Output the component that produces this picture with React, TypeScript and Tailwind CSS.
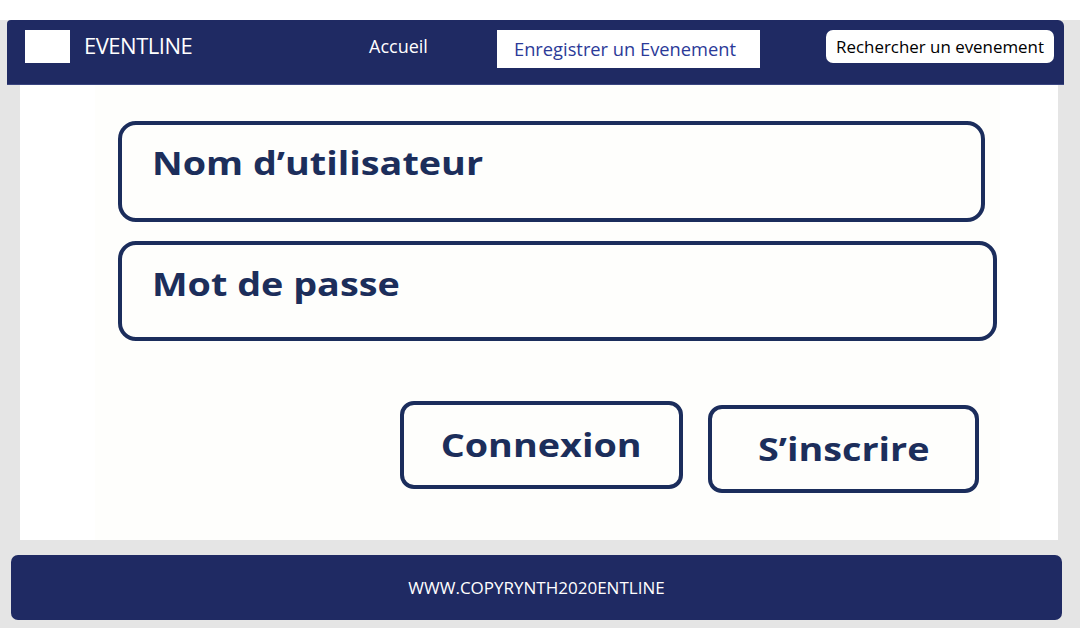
import React from "react";

export default function App() {
  const navy = "text-[#1c2e5b]";
  return (
    <div className="w-[1080px] h-[642px] bg-white overflow-hidden" style={{ fontFamily: "'Open Sans', 'Noto Sans', sans-serif" }}>
      <div className="mt-[20px] h-[608px] bg-[#e5e5e5] flex flex-col">
        {/* Header */}
        <header className="ml-[7px] mr-[16px] h-[65px] bg-[#1f2a63] rounded-tl-[4px] rounded-tr-[6px] flex items-start border-b border-[#3b4680]">
          <div className="ml-[18px] mt-[10px] w-[45px] h-[33px] bg-white" />
          <div className="ml-[14px] mt-[10px] w-[285px] text-white text-[22px] leading-[30px] tracking-[-0.5px]">EVENTLINE</div>
          <div className="mt-[13px] w-[128px] text-white text-[18px] leading-[26px]">Accueil</div>
          <div className="mt-[10px] w-[263px] h-[38px] bg-white flex items-center pl-[17px] text-[#2b3a98] text-[18.3px]">Enregistrer un Evenement</div>
          <div className="ml-[66px] mt-[10px] w-[228px] h-[33px] bg-white rounded-[7px] flex items-center justify-center text-black text-[16.9px]">Rechercher un evenement</div>
        </header>
        {/* Content */}
        <main className="ml-[20px] mr-[22px] h-[455px] bg-white flex">
          <div className="ml-[75px] w-[905px] bg-[#fefefc] flex flex-col">
            <div className={`mt-[36px] ml-[23px] w-[867px] h-[101px] border-[4px] border-[#1b2d5c] rounded-[18px] pl-[30px] pt-[18px] text-[32px] font-bold leading-[40px] ${navy}`}>
              <span className="inline-block origin-left scale-x-[1.18]">Nom d’utilisateur</span>
            </div>
            <div className={`mt-[19px] ml-[23px] w-[879px] h-[100px] border-[4px] border-[#1b2d5c] rounded-[18px] pl-[30px] pt-[19px] text-[32px] font-bold leading-[40px] ${navy}`}>
              <span className="inline-block origin-left scale-x-[1.18]">Mot de passe</span>
            </div>
            <div className="flex items-start mt-[60px]">
              <div className={`ml-[305px] w-[283px] h-[88px] border-[4px] border-[#1b2d5c] rounded-[14px] flex items-center justify-center text-[32px] font-bold ${navy}`}>
                <span className="inline-block scale-x-[1.18]">Connexion</span>
              </div>
              <div className={`ml-[25px] mt-[4px] w-[271px] h-[88px] border-[4px] border-[#1b2d5c] rounded-[14px] flex items-center justify-center text-[32px] font-bold ${navy}`}>
                <span className="inline-block scale-x-[1.18]">S’inscrire</span>
              </div>
            </div>
          </div>
        </main>
        {/* Footer */}
        <footer className="mt-[15px] ml-[11px] mr-[18px] h-[65px] bg-[#1f2a63] rounded-[7px] flex items-center justify-center">
          <span className="text-white text-[17px]">WWW.COPYRYNTH2020ENTLINE</span>
        </footer>
      </div>
    </div>
  );
}
